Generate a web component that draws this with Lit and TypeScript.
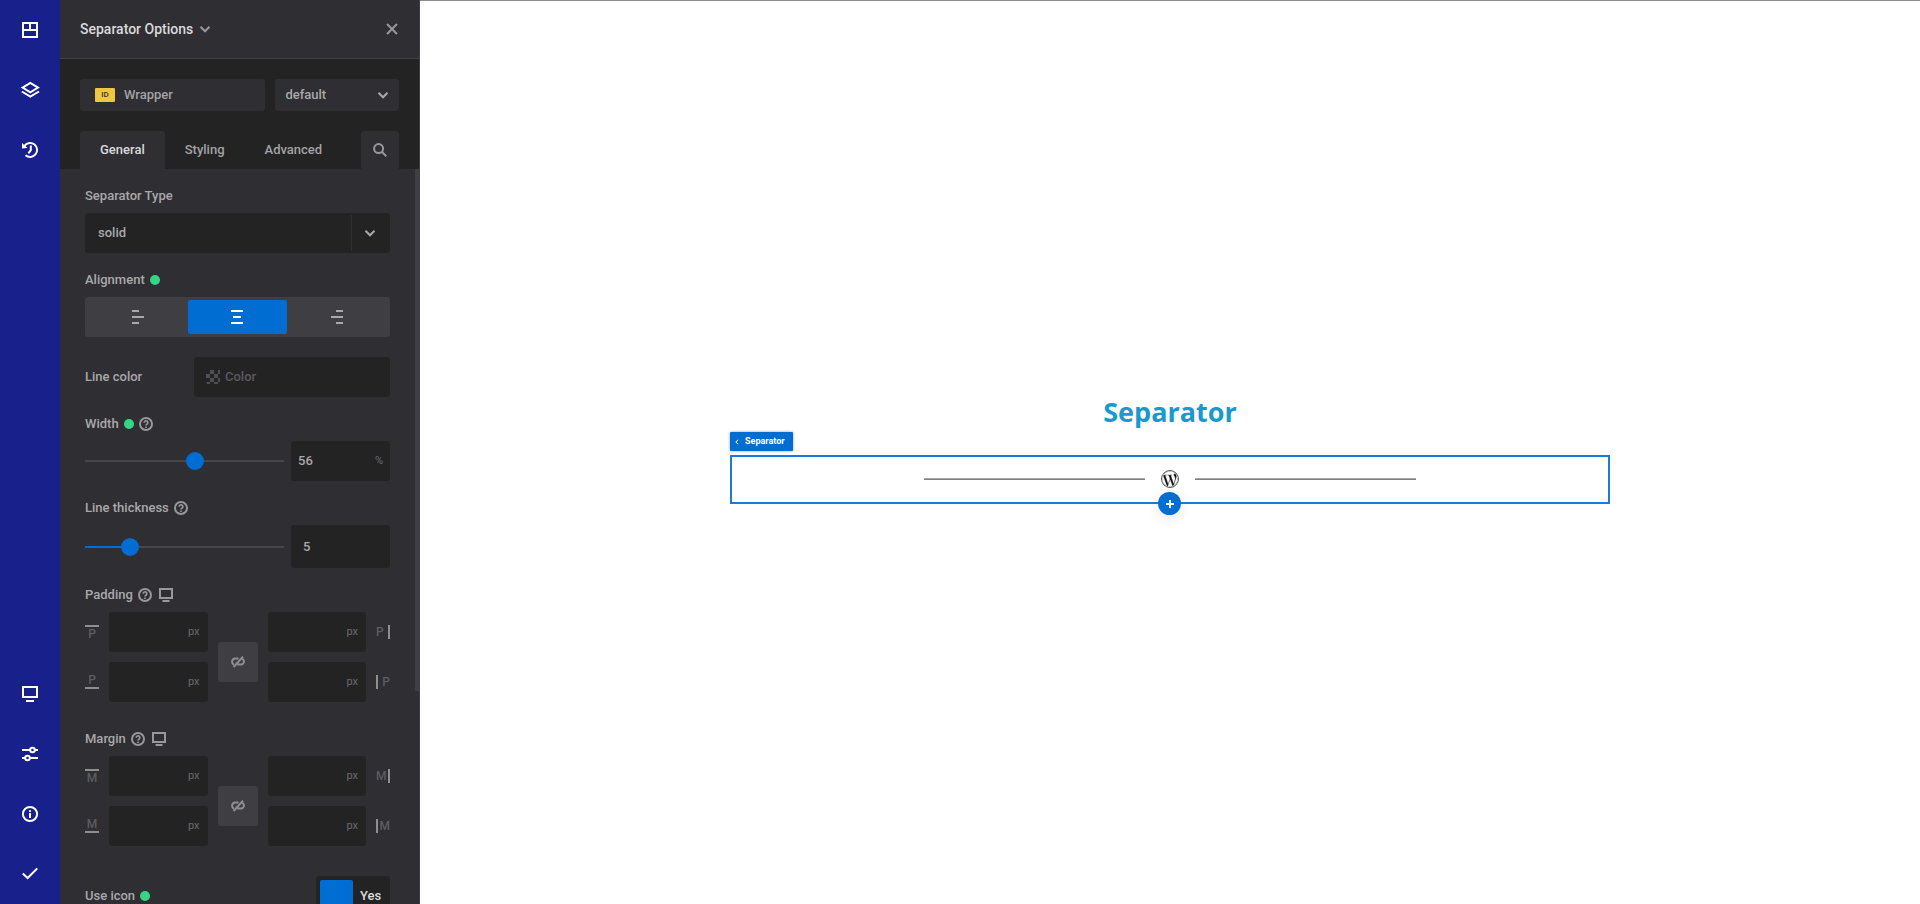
import { LitElement, html, css, svg, nothing, TemplateResult } from "lit";
import { customElement, property } from "lit/decorators.js";

const stroke = (size: number, body: TemplateResult, width = 2) => html`
  <svg width=${size} height=${size} viewBox="0 0 ${size} ${size}" fill="none" stroke="currentColor" stroke-width=${width} aria-hidden="true">${body}</svg>`;

const icons = {
  layout: stroke(20, svg`<path d="M3 3h14v14H3zM3 10h14M10 3v7"/>`),
  layers: stroke(20, svg`<path d="M2.600 7.600 10.300 3l7.700 4.600-7.700 4.800zM1.800 11.500l8.500 5.200L19 11.500"/>`),
  history: stroke(20, svg`<path d="M4.600 5.600A7 7 0 1 1 5.500 15.200" /><path d="M10.800 5.600v4.600L8.400 13.400"/><path d="M2 3v5.600l5.600-.6z" fill="currentColor" stroke="none"/>`),
  monitor: stroke(20, svg`<path d="M3 3h14v10H3zM6 17h8"/>`),
  sliders: stroke(20, svg`<path d="M2 6h8M15 6h3M2 14h3M10 14h8"/><circle cx="12.500" cy="6" r="2.300"/><circle cx="7.500" cy="14" r="2.300"/>`),
  info: stroke(20, svg`<circle cx="10" cy="10" r="7.100"/><path d="M10 9v5M10 6.200v1.800"/>`),
  check: stroke(20, svg`<path d="M2.800 9.600 7.600 14 17.300 4.400"/>`),
  chevron: stroke(12, svg`<path d="M1.500 3.800 6 8.300l4.500-4.500"/>`),
  close: stroke(12, svg`<path d="m1 1 10 10M11 1 1 11"/>`),
  search: stroke(14, svg`<circle cx="5.600" cy="5.600" r="4.500"/><path d="m8.900 8.900 4.400 4.400"/>`),
  help: stroke(14, svg`<circle cx="7" cy="7" r="6"/><path d="M5.200 5.700a1.800 1.800 0 1 1 2.900 1.400c-.7.5-1.100.7-1.100 1.500M7 9.500v1.500" stroke-width="1.700"/>`),
  device: stroke(14, svg`<path d="M1 1h12v9H1zM3.500 13h7"/>`),
  alignStart: stroke(14, svg`<path d="M1 1h7M1 7h12M1 13h7"/>`),
  alignCenter: stroke(14, svg`<path d="M1 1h12M3 7h8M1 13h12"/>`),
  alignEnd: stroke(14, svg`<path d="M6 1h7M1 7h12M6 13h7"/>`),
  unlink: stroke(14, svg`<path d="M2.800 9.600C.2 8.200.6 3.900 4.200 3.500H7.500M11 3.600c2.700.9 2.600 5.500-.8 5.900H6.300M2.600 12 12 1.700"/>`),
  plus: stroke(10, svg`<path d="M5 1v8M1 5h8"/>`),
  back: stroke(6, svg`<path d="M4.200.800 1.800 3l2.400 2.200"/>`, 1),
  checker: html`<svg width="14" height="14" viewBox="0 0 14 14" fill="currentColor" aria-hidden="true"><path d="M4 0h4v4H4zM12 0h2v4h-2zM0 4h4v4H0zM8 4h4v4H8zM4 8h4v4H4zM12 8h2v4h-2zM0 12h4v2H1zM8 12h4v2H8z"/></svg>`,
  wordpress: html`<svg width="18" height="18" viewBox="0 0 512 512" fill="#111" aria-hidden="true"><circle cx="256" cy="256" r="240" fill="#fff" stroke="#111" stroke-width="22"/><circle cx="256" cy="256" r="212"/><path fill="#fff" stroke="#fff" stroke-width="6" d="M61.7 169.4l101.5 278C92.2 413 43.3 340.2 43.3 256c0-30.9 6.6-60.1 18.4-86.6zm337.9 75.9c0-26.3-9.4-44.5-17.5-58.7-10.8-17.5-20.9-32.4-20.9-49.9 0-19.6 14.8-37.8 35.7-37.8.9 0 1.8.1 2.8.2-37.9-34.7-88.3-55.9-143.7-55.9-74.3 0-139.7 38.1-177.8 95.9 5 .2 9.7.3 13.7.3 22.2 0 56.7-2.7 56.7-2.7 11.5-.7 12.8 16.2 1.4 17.5 0 0-11.5 1.3-24.3 2l77.5 230.4L249.8 247l-33.1-90.8c-11.5-.7-22.3-2-22.3-2-11.5-.7-10.1-18.2 1.3-17.5 0 0 35.1 2.7 56 2.7 22.2 0 56.7-2.7 56.7-2.7 11.5-.7 12.8 16.2 1.4 17.5 0 0-11.5 1.3-24.3 2l76.9 228.7 21.2-70.9c9-29.4 16-50.5 16-68.7zm-139.9 29.3l-63.8 185.5c19.1 5.6 39.2 8.7 60.1 8.7 24.8 0 48.5-4.3 70.6-12.1-.6-.9-1.1-1.9-1.5-2.9l-65.4-179.2zm183-120.7c.9 6.8 1.4 14 1.4 21.9 0 21.6-4 45.8-16.2 76.2l-65 187.9C426.2 403 468.700 334.500 468.700 256c0-37-9.400-71.800-26-102.100z"/></svg>`,
};

const base = css`
  * { box-sizing: border-box; }
  button, input, select { font: inherit; color: inherit; background: none; border: 0; padding: 0; margin: 0; border-radius: 0; min-width: 0; }
  button { cursor: pointer; display: flex; align-items: center; justify-content: center; }
  svg { display: block; flex: none; }
`;

@customElement("icon-rail")
class IconRail extends LitElement {
  static styles = [base, css`
    :host { display: flex; flex-direction: column; justify-content: space-between; background: #18208c; color: #fff; }
    .item { width: 60px; height: 60px; }
  `];
  private item(label: string, icon: TemplateResult) {
    return html`<button class="item" aria-label=${label}>${icon}</button>`;
  }
  render() {
    return html`
      <nav>${this.item("Elements", icons.layout)}${this.item("Layers", icons.layers)}${this.item("History", icons.history)}</nav>
      <nav>${this.item("Devices", icons.monitor)}${this.item("Settings", icons.sliders)}${this.item("Info", icons.info)}${this.item("Save", icons.check)}</nav>`;
  }
}

@customElement("box-sides")
class BoxSides extends LitElement {
  @property() name = "";
  static styles = [base, css`
    :host { display: grid; grid-template-columns: 14px 1fr 40px 1fr 14px; grid-template-rows: 40px 40px; gap: 10px; align-items: center; }
    .mark { display: flex; align-items: center; justify-content: center; width: 14px; height: 14px; font-size: 12px; line-height: 10px; color: #5d5c60; border: 0 solid #8f8e90; }
    .top { border-top-width: 2px; align-items: flex-end; }
    .bottom { border-bottom-width: 2px; align-items: flex-start; }
    .right { border-right-width: 2px; justify-content: flex-start; }
    .left { border-left-width: 2px; justify-content: flex-end; }
    .cell { display: flex; align-items: center; height: 40px; padding: 0 8px; background: #232324; border-radius: 3px; color: #a9a8aa; }
    .value { flex: 1; width: 0; height: 40px; outline: 0; }
    .unit { font-size: 11px; font-weight: 400; color: #6a696d; }
    .link { grid-column: 3; grid-row: 1 / span 2; align-self: end; height: 40px; margin-bottom: 20px; background: #3f3e43; border-radius: 3px; color: #8f8e90; }
  `];
  private cell(side: string) {
    return html`<label class="cell"><input class="value" aria-label="${this.name} ${side}" /><span class="unit">px</span></label>`;
  }
  render() {
    const mark = this.name.charAt(0);
    return html`
      <span class="mark top">${mark}</span>${this.cell("top")}
      <button class="link" aria-label="Link ${this.name} values">${icons.unlink}</button>
      ${this.cell("right")}<span class="mark right">${mark}</span>
      <span class="mark bottom">${mark}</span>${this.cell("bottom")}
      ${this.cell("left")}<span class="mark left">${mark}</span>`;
  }
}

@customElement("options-panel")
class OptionsPanel extends LitElement {
  static styles = [base, css`
    :host { display: flex; flex-direction: column; min-height: 0; background: #2f2e33; color: #a9a8aa; font: 500 13px/20px Roboto, "Liberation Sans", sans-serif; }
    .header { display: flex; align-items: center; height: 59px; padding: 0 21px 0 20px; border-bottom: 1px solid #414045; border-right: 1px solid #3f3e43; }
    .title { gap: 6px; font-size: 14px; color: #dad9db; }
    .title svg, .close { color: #98979a; }
    .close { margin-left: auto; }
    .top { padding: 20px 20px 0; background: #232324; border-right: 1px solid #3f3e43; }
    .row { display: grid; grid-template-columns: 3fr 2fr; gap: 10px; margin-bottom: 20px; }
    .box { display: flex; align-items: center; height: 32px; background: #2f2e33; border-radius: 3px; }
    .id { padding: 0 15px; gap: 9px; }
    .badge { width: 20px; height: 14px; border-radius: 1px; background: #f0c541; color: #3a3520; font-size: 8px; line-height: 14px; text-align: center; }
    .id input { flex: 1; width: 0; outline: 0; }
    .id input::placeholder { color: #a3a2a5; opacity: 1; }
    .select { display: grid; align-items: center; }
    .select > * { grid-row: 1; grid-column: 1; }
    .select select { appearance: none; width: 100%; height: 100%; padding: 0 10px; outline: 0; }
    .select svg { justify-self: end; margin-right: 10px; pointer-events: none; }
    .tabs { display: flex; height: 38px; }
    .tab { padding: 0 20px; border-radius: 3px 3px 0 0; color: #a3a2a5; }
    .active { background: #2f2e33; color: #dad9db; }
    .search { width: 38px; margin-left: auto; background: #2f2e33; border-radius: 3px 3px 0 0; color: #98979a; }
    .scroll { flex: 1; min-height: 0; display: grid; grid-template: 100% / 1fr 5px; overflow: hidden; }
    .fields { display: flex; flex-direction: column; gap: 17px; min-width: 0; padding: 17px 25px; }
    .track { box-shadow: inset -1px 0 #3f3e43; }
    .thumb { height: 71%; background: #3f3e43; }
    .field { display: flex; flex-direction: column; gap: 7px; }
    .label { display: flex; align-items: center; gap: 5px; height: 20px; }
    .label .hint, .label .device { display: block; color: #98979a; }
    .label .device { margin-left: 2px; }
    .dot { width: 10px; height: 10px; border-radius: 5px; background: #34d585; }
    .dark { height: 40px; background: #232324; border-radius: 3px; }
    .big select { padding: 0 13px; }
    .big svg { margin-right: 14px; }
    .divider { justify-self: end; width: 1px; height: 36px; margin-right: 38px; background: #2f2e33; pointer-events: none; }
    .segments { display: grid; grid-template-columns: repeat(3, 1fr); height: 40px; padding: 3px; background: #3f3e43; border-radius: 3px; }
    .segment { border-radius: 2px; color: #a9a8aa; }
    .on { background: #006dd2; color: #fff; }
    .inline { display: flex; align-items: center; justify-content: space-between; padding-top: 3px; }
    .color { display: flex; align-items: center; gap: 5px; width: 196px; padding: 0 12px; color: #4f4e52; }
    .color input { flex: 1; width: 0; outline: 0; }
    .color input::placeholder { color: #5a595d; opacity: 1; }
    .slider { display: grid; grid-template-columns: 1fr 99px; gap: 7px; align-items: center; }
    .range { appearance: none; width: 100%; height: 18px; background: linear-gradient(#006dd2, #006dd2) 0 8px / var(--fill, 0) 2px no-repeat, linear-gradient(#47464b, #47464b) 0 8px / 100% 2px no-repeat; }
    .range::-webkit-slider-thumb { appearance: none; width: 18px; height: 18px; border-radius: 9px; background: #006dd2; }
    .number { display: flex; align-items: center; padding: 0 7px; }
    .number input { flex: 1; width: 0; outline: 0; }
    .unit { font-size: 11px; font-weight: 400; color: #6a696d; }
    .tall { height: 43px; padding: 0 12px; }
    .group { padding-bottom: 10px; }
    .toggle { display: flex; align-items: center; gap: 7px; width: 74px; padding: 4px; color: #dad9db; }
    .toggle input { appearance: none; width: 33px; height: 32px; border-radius: 2px; background: #006dd2; }
  `];

  private label(text: string, id: string, opts: { dot?: boolean; help?: boolean; device?: boolean } = {}) {
    return html`<div class="label">
      <label for=${id}>${text}</label>
      ${opts.dot ? html`<span class="dot"></span>` : nothing}
      ${opts.help ? html`<button class="hint" aria-label="Help: ${text}">${icons.help}</button>` : nothing}
      ${opts.device ? html`<button class="device" aria-label="Device: ${text}">${icons.device}</button>` : nothing}
    </div>`;
  }

  render() {
    return html`
      <header class="header">
        <button class="title">Separator Options ${icons.chevron}</button>
        <button class="close" aria-label="Close">${icons.close}</button>
      </header>
      <div class="top">
        <div class="row">
          <label class="box id"><span class="badge">ID</span><input aria-label="Wrapper ID" placeholder="Wrapper" /></label>
          <div class="box select"><select aria-label="State"><option>default</option></select>${icons.chevron}</div>
        </div>
        <div class="tabs">
          <button class="tab active">General</button>
          <button class="tab">Styling</button>
          <button class="tab">Advanced</button>
          <button class="search" aria-label="Search">${icons.search}</button>
        </div>
      </div>
      <div class="scroll">
        <div class="fields">
          <div class="field">
            ${this.label("Separator Type", "type")}
            <div class="select dark big"><select id="type"><option>solid</option></select><span class="divider"></span>${icons.chevron}</div>
          </div>
          <div class="field">
            ${this.label("Alignment", "align", { dot: true })}
            <div class="segments">
              <button class="segment" aria-label="Left">${icons.alignStart}</button>
              <button class="segment on" id="align" aria-label="Center">${icons.alignCenter}</button>
              <button class="segment" aria-label="Right">${icons.alignEnd}</button>
            </div>
          </div>
          <div class="inline">
            ${this.label("Line color", "color")}
            <div class="dark color">${icons.checker}<input id="color" placeholder="Color" /></div>
          </div>
          <div class="field">
            ${this.label("Width", "width", { dot: true, help: true })}
            <div class="slider">
              <input class="range" type="range" min="0" max="100" value="56" aria-label="Width slider" />
              <div class="dark number"><input id="width" value="56" /><span class="unit">%</span></div>
            </div>
          </div>
          <div class="field">
            ${this.label("Line thickness", "thickness", { help: true })}
            <div class="slider">
              <input class="range" type="range" min="0" max="25" value="5" aria-label="Line thickness slider" style="--fill: 20%" />
              <div class="dark number tall"><input id="thickness" value="5" /></div>
            </div>
          </div>
          <div class="field group">
            ${this.label("Padding", "padding", { help: true, device: true })}
            <box-sides id="padding" name="Padding"></box-sides>
          </div>
          <div class="field group">
            ${this.label("Margin", "margin", { help: true, device: true })}
            <box-sides id="margin" name="Margin"></box-sides>
          </div>
          <div class="inline">
            ${this.label("Use icon", "use-icon", { dot: true })}
            <label class="dark toggle"><input type="checkbox" id="use-icon" checked />Yes</label>
          </div>
        </div>
        <div class="track"><div class="thumb"></div></div>
      </div>`;
  }
}

@customElement("page-canvas")
class PageCanvas extends LitElement {
  static styles = [base, css`
    :host { display: flex; flex-direction: column; align-items: center; justify-content: center; padding: 0 40px 7px; background: #fff; border-top: 1px solid #8c8c8c; }
    .heading { margin: 0 0 25px; font: 700 27px/36px "Open Sans", "Noto Sans", sans-serif; color: #1a99cd; }
    .selected { position: relative; display: flex; align-items: center; justify-content: center; width: 100%; max-width: 880px; height: 49px; box-shadow: inset 0 0 0 2px #1b7cd7; }
    .tag { position: absolute; left: 0; bottom: 53px; gap: 5px; height: 19px; padding: 0 8px 0 4px; border-radius: 1px; background: #006dd2; color: #fff; font: 700 9px/19px Roboto, sans-serif; box-shadow: 0 0 3px rgba(0, 0, 0, 0.4); }
    .add { position: absolute; left: 50%; bottom: -11px; width: 23px; height: 23px; margin-left: -12px; border-radius: 12px; background: #006dd2; color: #fff; box-shadow: 0 3px 14px rgba(0, 0, 0, 0.1); }
    .separator { display: flex; align-items: center; gap: 16px; width: 56%; margin-bottom: 2px; }
    .line { flex: 1; height: 2px; border-top: 1px solid #a6a6a6; background: #808080; }
  `];
  render() {
    return html`
      <h2 class="heading">Separator</h2>
      <div class="selected">
        <button class="tag">${icons.back}<span>Separator</span></button>
        <div class="separator"><span class="line"></span>${icons.wordpress}<span class="line"></span></div>
        <button class="add" aria-label="Add element">${icons.plus}</button>
      </div>`;
  }
}

@customElement("app-root")
class AppRoot extends LitElement {
  static styles = css`
    :host { display: grid; grid-template-columns: 60px 360px 1fr; grid-template-rows: 100vh; overflow: hidden; }
  `;
  render() {
    return html`<icon-rail></icon-rail><options-panel></options-panel><page-canvas></page-canvas>`;
  }
}
